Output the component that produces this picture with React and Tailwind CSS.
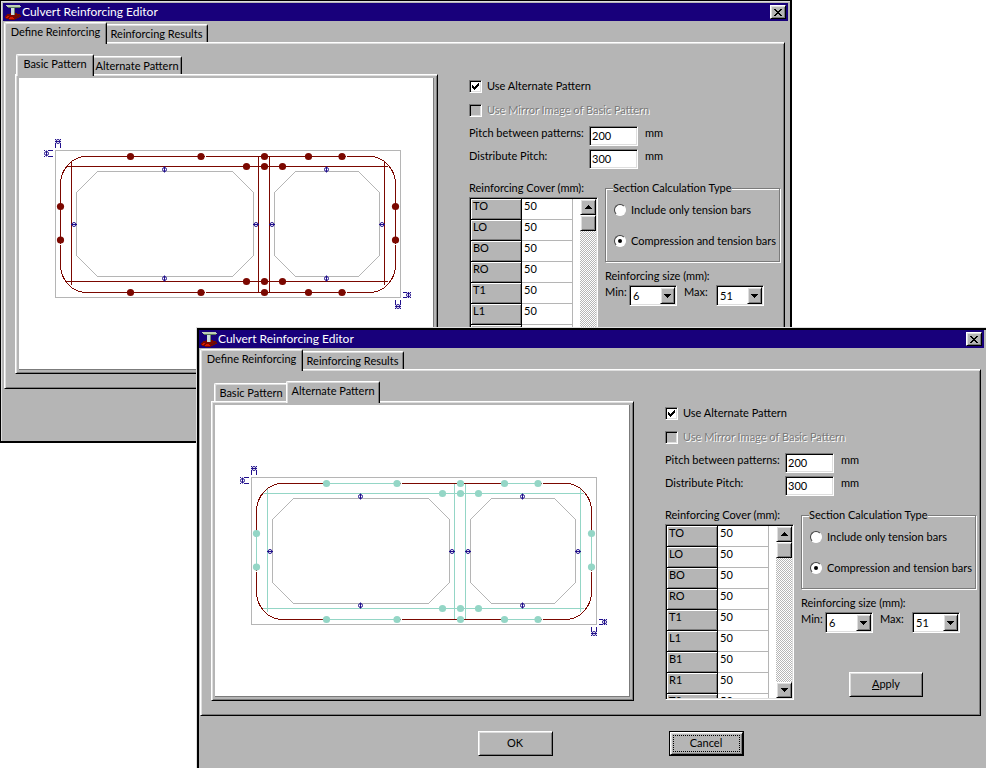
import { useId, useState } from "react";
import clsx from "clsx";

const COVERS = ["TO", "LO", "BO", "RO", "T1", "L1", "B1", "R1", "T2"];
const SIZES = [6, 10, 13, 16, 19, 22, 25, 29, 32, 35, 38, 41, 51];

const raised = "border border-t-white border-l-white border-r-black border-b-black shadow-[inset_1px_1px_0_#dedede,inset_-1px_-1px_0_#7b7b7b]";
const sunken = "border border-t-[#7b7b7b] border-l-[#7b7b7b] border-r-white border-b-white shadow-[inset_1px_1px_0_#000,inset_-1px_-1px_0_#dedede]";

function AppIcon() {
    return (
        <svg width="16" height="16" viewBox="0 0 16 16" shapeRendering="crispEdges">
            <path d="M2 10h3v-1h7v1h3v1h1v2h-2v1h-2v1h-2v1H4v-1H1v-1H0v-2h1v-1h1z" fill="#7b0800" />
            <path d="M2 12h2v1H2zM5 13h3v1H5zM1 13h2v1H1zM4 14h5v1H4z" fill="#d61800" />
            <path d="M13 11h3v1h-2v1h-2v1h-2v-1h2v-1h1z" fill="#5a1010" />
            <path d="M1 1h14v1h1v1H2V2H1z" fill="#bdceb5" />
            <path d="M3 3h12v1H3z" fill="#5a7b5a" />
            <path d="M6 4h3v7H6z" fill="#cededa" />
            <path d="M9 4h1v7H9z" fill="#738473" />
        </svg>
    );
}

function Arrow({ down }) {
    return (
        <svg width="7" height="4" viewBox="0 0 7 4" shapeRendering="crispEdges">
            <path d={down ? "M0 0h7v1H0zM1 1h5v1H1zM2 2h3v1H2zM3 3h1v1H3z" : "M3 0h1v1H3zM2 1h3v1H2zM1 2h5v1H1zM0 3h7v1H0z"} />
        </svg>
    );
}

// small circle with a line through it, marks where a dimension can be picked
function Mark({ x, y, vertical }) {
    return (
        <g stroke="#21108c" fill="none">
            <circle cx={x} cy={y} r="2" />
            {vertical ? <path d={`M${x} ${y - 3}v6`} /> : <path d={`M${x - 3} ${y}h6`} />}
        </g>
    );
}

function Section({ alternate }) {
    const bar = "#7b0800";
    const main = alternate ? "#94d6c6" : bar;
    const outerX = [130.5, 201, 264.5, 308.5, 342];
    const innerX = [246.5, 264.5, 282.5];
    const dots = [
        ...outerX.flatMap((x) => [[x, 156.5], [x, 292.5]]),
        ...innerX.flatMap((x) => [[x, 166.5], [x, 281.5]]),
        [60.5, 206.5], [60.5, 240], [395.5, 206.5], [395.5, 240],
    ];

    return (
        <svg className="block bg-white" width="414" height="291" viewBox="19 78 414 291" fill="none">
            <g stroke="#b5b5b5" shapeRendering="crispEdges">
                <path d="M55.5 150.5h345v147h-345z" />
                <path d="M97.5 171.5h135l21 21v63l-21 21h-135l-21-21v-63z" />
                <path d="M295.5 171.5h63l21 21v63l-21 21h-63l-21-21v-63z" />
            </g>

            {/* outer bar */}
            <rect x="60.5" y="156.5" width="335" height="136" rx="26" ry="28" stroke={bar} shapeRendering="crispEdges" />
            <g stroke={main} shapeRendering="crispEdges">
                <path d="M130 156.5h71M308 156.5h34M130 292.5h71M308 292.5h34M60.5 206v34M395.5 206v34" />
                <path d="M67 166.5h321M67 281.5h321M71.5 162v123M384.5 162v123M258.5 157v135M269.5 157v135" />
            </g>
            <g stroke="#fff" shapeRendering="crispEdges">
                <path d="M205 156.5h1M346 156.5h1M205 292.5h1M346 292.5h1M60.5 244v1M395.5 244v1" />
            </g>
            {dots.map(([x, y]) => (
                <circle key={`${x}-${y}`} cx={x} cy={y} r="3.6" fill={main} />
            ))}

            <Mark x={164.5} y={169.5} vertical />
            <Mark x={164.5} y={278.5} vertical />
            <Mark x={326.5} y={169.5} vertical />
            <Mark x={326.5} y={278.5} vertical />
            <Mark x={74} y={224.5} />
            <Mark x={256} y={224.5} />
            <Mark x={272} y={224.5} />
            <Mark x={382} y={224.5} />

            {/* cover marks at the corners */}
            <Mark x={58} y={141.5} />
            <Mark x={46.5} y={153.5} vertical />
            <Mark x={408.5} y={295} vertical />
            <Mark x={398} y={306.5} />
            <g stroke="#21108c" shapeRendering="crispEdges">
                <path d="M55.5 144v4M60.5 144v4M49 150.5h4M49 156.5h4" />
                <path d="M403 292.5h3M403 297.5h3M395.5 300v4M400.5 300v4" />
                <path d="M55 139.5h1M60 139.5h1M55 143.5h1M60 143.5h1M44 150.5h1M48 150.5h1M44 156.5h1M48 156.5h1" />
                <path d="M406 292.5h1M410 292.5h1M406 297.5h1M410 297.5h1M395 304.5h1M400 304.5h1M395 308.5h1M400 308.5h1" />
            </g>
        </svg>
    );
}

function Tab({ active, className, children, onClick }) {
    return (
        <button
            type="button"
            role="tab"
            aria-selected={active}
            onClick={onClick}
            className={clsx(
                "flex shrink-0 items-start justify-center rounded-t-[2px] border-t border-l border-r border-t-white border-l-white border-r-black bg-[#b5b5b5] leading-[18px] shadow-[inset_1px_1px_0_#dedede,inset_-1px_0_0_#7b7b7b] whitespace-nowrap",
                active ? "relative z-10 -mx-[2px] -mb-[2px] h-[22px] px-[2px]" : "h-[18px]",
                className
            )}
        >
            {children}
        </button>
    );
}

function Check({ label, disabled, defaultChecked }) {
    return (
        <label className="flex h-6 items-center gap-[5px]">
            <span className="relative flex">
                <input type="checkbox" disabled={disabled} defaultChecked={defaultChecked} className={clsx("peer size-[13px] appearance-none", sunken, disabled ? "bg-[#b5b5b5]" : "bg-white")} />
                <svg className="pointer-events-none absolute top-[3px] left-[3px] hidden peer-checked:block" width="7" height="7" viewBox="0 0 7 7" shapeRendering="crispEdges">
                    <path d="M0 2h1v1h1v1h1V3h1V2h1V1h1V0h1v3H6v1H5v1H4v1H3v1H2V6H1V5H0z" />
                </svg>
            </span>
            <span className={clsx(disabled && "text-[#7b7b7b] [text-shadow:1px_1px_0_#fff]")}>{label}</span>
        </label>
    );
}

function Radio({ name, label, defaultChecked }) {
    return (
        <label className="flex h-[14px] items-center gap-[5px] whitespace-nowrap">
            <span className="relative flex">
                <input type="radio" name={name} defaultChecked={defaultChecked} className="peer size-3 appearance-none rounded-full border border-t-[#404040] border-r-white border-b-white border-l-[#404040] bg-white" />
                <span className="pointer-events-none absolute top-1 left-1 hidden size-1 rounded-full bg-black peer-checked:block" />
            </span>
            {label}
        </label>
    );
}

function PitchField({ label, value }) {
    const id = useId();
    return (
        <div className="flex items-start leading-[14px]">
            <label htmlFor={id} className="w-[120px]">{label}</label>
            <input id={id} defaultValue={value} className={clsx("h-5 w-[49px] bg-white px-[2px] pb-[2px]", sunken)} />
            <span className="ml-[7px]">mm</span>
        </div>
    );
}

function SizeSelect({ label, value }) {
    const id = useId();
    return (
        <div className="flex items-start leading-[14px]">
            <label htmlFor={id} className="w-6 shrink-0 group-last:w-8">{label}</label>
            <span className="relative flex">
                <select id={id} defaultValue={value} className={clsx("h-[21px] w-12 appearance-none bg-white pl-[3px]", sunken)}>
                    {SIZES.map((s) => <option key={s}>{s}</option>)}
                </select>
                <span className={clsx("pointer-events-none absolute top-[2px] right-[2px] flex h-[17px] w-[15px] items-center justify-center bg-[#b5b5b5]", raised)}>
                    <Arrow down />
                </span>
            </span>
        </div>
    );
}

function CoverTable() {
    const id = useId();
    return (
        <div className="w-[129px]">
            <div id={id} className="leading-[14px] whitespace-nowrap">Reinforcing Cover (mm):</div>
            <div className={clsx("mt-[2px] flex h-44 bg-white p-px", sunken)}>
                <div className="flex-1 overflow-hidden">
                    <table aria-labelledby={id} className="w-[102px] table-fixed border-separate border-spacing-0 text-left leading-[14px]">
                        <tbody>
                            {COVERS.map((name) => (
                                <tr key={name} className="h-[21px]">
                                    <th scope="row" className="h-[21px] border-r border-b border-black bg-[#b5b5b5] px-[2px] py-0 align-top font-normal shadow-[inset_1px_1px_0_#fff,inset_-1px_-1px_0_#7b7b7b]">{name}</th>
                                    <td className="h-[21px] border-r border-b border-[#b5b5b5] px-[2px] py-0 align-top">50</td>
                                </tr>
                            ))}
                        </tbody>
                    </table>
                </div>
                <div className="flex w-4 flex-col bg-[repeating-conic-gradient(#fff_0_25%,#b5b5b5_0_50%)] bg-[length:2px_2px]">
                    <button type="button" aria-label="Scroll up" className={clsx("flex h-4 items-center justify-center bg-[#b5b5b5]", raised)}><Arrow /></button>
                    <span className={clsx("h-4 bg-[#b5b5b5]", raised)} />
                    <button type="button" aria-label="Scroll down" className={clsx("mt-auto flex h-4 items-center justify-center bg-[#b5b5b5]", raised)}><Arrow down /></button>
                </div>
            </div>
        </div>
    );
}

function EditorWindow({ className, initialTab }) {
    const [page, setPage] = useState("define");
    const [tab, setTab] = useState(initialTab);
    const radioName = useId();

    return (
        <section className={clsx("absolute w-[792px] bg-[#b5b5b5]", className)}>
            <header className="mr-[2px] flex h-[18px] items-center bg-[#18007b] px-[2px] text-[12px] text-white">
                <AppIcon />
                <h1 className="ml-px">Culvert Reinforcing Editor</h1>
                <button type="button" aria-label="Close" className={clsx("ml-auto flex h-[14px] w-4 items-center justify-center bg-[#b5b5b5]", raised)}>
                    <svg width="8" height="7" viewBox="0 0 8 7" shapeRendering="crispEdges">
                        <path d="M0 0h2v1h1v1h2V1h1V0h2v1H7v1H6v1H5v1h1v1h1v1h1v1H6V6H5V5H3v1H2v1H0V6h1V5h1V4h1V3H2V2H1V1H0z" />
                    </svg>
                </button>
            </header>

            <div role="tablist" className="ml-px flex h-[21px] items-end pl-[2px]">
                <Tab active={page === "define"} onClick={() => setPage("define")} className={page === "define" ? "w-[103px]" : "w-[99px]"}>Define Reinforcing</Tab>
                <Tab active={page === "results"} onClick={() => setPage("results")} className={page === "results" ? "w-[107px]" : "w-[103px]"}>Reinforcing Results</Tab>
            </div>

            <div className={clsx("mr-[5px] ml-px flex items-start gap-[31px] px-[10px] pt-[10px] pb-[14px]", raised)}>
                <div>
                    <div role="tablist" className="flex h-[21px] items-end pl-[3px]">
                        <Tab active={tab === "basic"} onClick={() => setTab("basic")} className={tab === "basic" ? "w-[78px]" : "w-[74px]"}>Basic Pattern</Tab>
                        <Tab active={tab === "alternate"} onClick={() => setTab("alternate")} className={tab === "alternate" ? "w-[94px]" : "w-[90px]"}>Alternate Pattern</Tab>
                    </div>
                    <div className={clsx("p-[3px]", raised)}>
                        <div className="border-r border-b border-[#7b7b7b]">
                            <Section alternate={tab === "alternate"} />
                        </div>
                    </div>
                </div>

                <div className="pt-[21px]">
                    <Check label="Use Alternate Pattern" defaultChecked />
                    <Check label="Use Mirror Image of Basic Pattern" disabled />
                    <div className="mt-1 flex flex-col gap-[3px]">
                        <PitchField label="Pitch between patterns:" value="200" />
                        <PitchField label="Distribute Pitch:" value="300" />
                    </div>

                    <div className="mt-3 flex items-start gap-[7px]">
                        <CoverTable />
                        <div className="w-[175px]">
                            <fieldset className="flex min-w-0 flex-col gap-[17px] border border-[#7b7b7b] px-2 pt-2 pb-[13px] shadow-[1px_1px_0_#fff,inset_1px_1px_0_#fff]">
                                <legend className="-ml-px bg-[#b5b5b5] leading-[14px]">Section Calculation Type</legend>
                                <Radio name={radioName} label="Include only tension bars" />
                                <Radio name={radioName} label="Compression and tension bars" defaultChecked />
                            </fieldset>
                            <div className="mt-[7px] leading-[14px]">Reinforcing size (mm):</div>
                            <div className="mt-[2px] flex gap-[7px]">
                                <div><SizeSelect label="Min:" value="6" /></div>
                                <div className="group"><SizeSelect label="Max:" value="51" /></div>
                            </div>
                            <button type="button" className={clsx("mt-[39px] ml-12 flex h-[25px] w-[74px] items-center justify-center", raised)}>
                                <span><u>A</u>pply</span>
                            </button>
                        </div>
                    </div>
                </div>
            </div>

            <footer className="flex justify-center gap-[116px] pt-[15px] pb-3 pl-9">
                <button type="button" className={clsx("h-[25px] w-[75px]", raised)}>OK</button>
                <button type="button" className="h-[25px] w-[75px] border border-black">
                    <span className={clsx("flex h-full p-[2px]", raised)}>
                        <span className="flex-1 border border-dotted border-black leading-[14px]">Cancel</span>
                    </span>
                </button>
            </footer>
        </section>
    );
}

export default function App() {
    return (
        <main className="relative h-screen overflow-hidden bg-white font-[Lato,'Liberation_Sans',sans-serif] text-[11px] text-black">
            <EditorWindow
                initialTab="basic"
                className="top-0 left-0 border-t border-r-2 border-b-2 border-l border-black pt-[2px] pl-[2px] shadow-[inset_1px_1px_0_#dedede]"
            />
            <EditorWindow
                initialTab="alternate"
                className="top-[327px] left-[196px] border-t border-r-2 border-b-2 border-l border-t-[#dedede] border-r-black border-b-black border-l-[#dedede] pt-[2px] pl-[2px] shadow-[inset_2px_2px_0_#000]"
            />
        </main>
    );
}
